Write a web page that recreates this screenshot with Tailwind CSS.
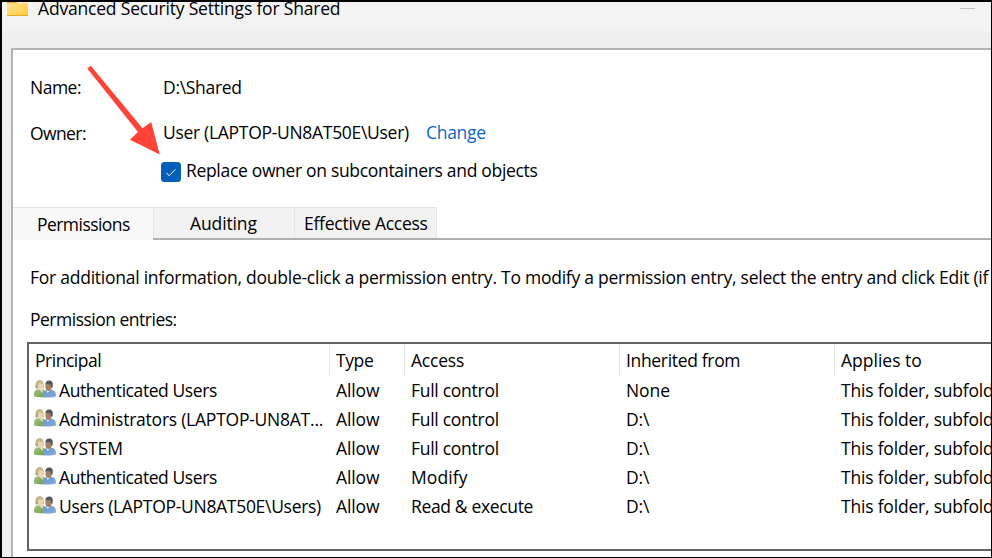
<!DOCTYPE html>
<html lang="en">
<head>
    <meta charset="UTF-8">
    <meta name="viewport" content="width=device-width, initial-scale=1.0">
    <title>Advanced Security Settings for Shared</title>
    <script src="https://cdn.jsdelivr.net/npm/@tailwindcss/browser@4"></script>
</head>
<body class="bg-black">
    <svg class="absolute h-0 w-0">
        <linearGradient id="folder-fill" x1="0" y1="0" x2="1" y2="1">
            <stop offset="0" stop-color="#ffe69a"/>
            <stop offset="1" stop-color="#ffc83d"/>
        </linearGradient>
        <linearGradient id="green-shirt" x1="0" y1="0" x2="1" y2="1">
            <stop offset="0" stop-color="#a9c585"/>
            <stop offset="1" stop-color="#6b9c50"/>
        </linearGradient>
        <linearGradient id="blue-shirt" x1="0" y1="0" x2="1" y2="1">
            <stop offset="0" stop-color="#6797cd"/>
            <stop offset="1" stop-color="#86acdc"/>
        </linearGradient>
        <symbol id="group-icon" viewBox="0 0 22 18">
            <path d="M1.500 8.500C1.300 4 1.800.3 5.500.3c3.400 0 4.300 2.500 4.200 7.700z" fill="#b3a275"/>
            <path d="M0 16.500v-2.700C0 11 1.500 9.800 3.800 9.200h4.700c2 .4 2.800 1.800 2.800 4V16.800q-5 1.200-11.300-.3z" fill="url(#green-shirt)"/>
            <path d="M4.300 8.500h4.500L8.700 13z" fill="#efe0c4"/>
            <ellipse cx="6.600" cy="5.700" rx="2.700" ry="4" fill="#ecd5b2"/>
            <path d="M2.300 6C2.500 2.500 4 .8 6.500 1c1.700.2 2.600 1.200 2.900 3.200C7.700 4 6.500 3.400 5.700 2.700 5.200 4.200 4 5.500 2.300 6z" fill="#c9ba8c"/>
            <path d="M9.300 17.400c-.2-4.200.6-6.600 3.700-7.300h5c3.200.5 4 2.500 4 6.500-3.500 1.100-9 1.200-12.700.8z" fill="url(#blue-shirt)"/>
            <path d="M12.300 9.700h4.500L13.500 13z" fill="#e9eef5"/>
            <ellipse cx="14.600" cy="6.700" rx="3.200" ry="4.200" fill="#a58164"/>
            <path d="M11.300 4.800C11.400 1.800 12.800.6 15.200.6c3 0 4.400 2 3.200 7.100l-1.500-.5-.4-2.900c-1.700.2-3.200-.1-4-.9-.2.700-.6 1.200-1.200 1.400z" fill="#55565a"/>
        </symbol>
    </svg>

    <div class="relative h-[558px] w-[992px] overflow-hidden border-t-2 border-r border-b border-l-2 border-black bg-[#efefef] font-['Open_Sans','Noto_Sans',sans-serif] text-[17.5px] leading-6 whitespace-nowrap text-black">
        <header class="flex h-[29px] items-start justify-between overflow-hidden bg-[#f3f3f3]">
            <div class="flex">
                <svg class="ml-[5px] h-[14px] w-[21px]" viewBox="0 0 21 14">
                    <path d="M0 0h9l2 1h10v12.500H0z" fill="url(#folder-fill)"/>
                    <path d="M0 0h9l1.500 1.200H0z" fill="#f0b429"/>
                    <path d="M0 13h21v1H0z" fill="#eba922"/>
                </svg>
                <h1 class="-mt-[6px] ml-[10px] tracking-[-0.19px]">Advanced Security Settings for Shared</h1>
            </div>
            <div class="mt-[6px] mr-4 h-px w-[15px] bg-[#c3c3c3]"></div>
        </header>

        <main class="mt-[17px] ml-[9px] h-[509px] overflow-hidden border-t-2 border-l-2 border-[#b3b3b3] bg-white">
            <div class="grid grid-cols-[133px_1fr] pt-[25px] pl-[17px]">
                <span class="tracking-[-0.5px]">Name:</span>
                <span class="tracking-[-0.3px]">D:\Shared</span>
                <span class="mt-[22px] tracking-[-0.6px]">Owner:</span>
                <div class="mt-[21px] flex">
                    <span class="w-[263px] tracking-[-0.3px]">User (LAPTOP-UN8AT50E\User)</span>
                    <a class="tracking-[-0.3px] text-[#0f66c4]">Change</a>
                </div>
            </div>
            <label class="mt-[13px] ml-[148px] flex">
                <svg class="mt-1 mr-[5px] h-5 w-5" viewBox="0 0 20 20">
                    <rect width="20" height="20" rx="3.500" fill="#005fb8"/>
                    <path d="M5.200 10.800l3 2.900 6.300-6.400" fill="none" stroke="#fff" stroke-width="1"/>
                </svg>
                <span class="tracking-[-0.32px]">Replace owner on subcontainers and objects</span>
            </label>

            <nav class="mt-[25px] flex h-[33px] items-stretch">
                <div class="w-[140px] border-t border-[#e5e5e5] bg-[#f9f9f9] pt-1 pl-6 tracking-[-0.55px]">Permissions</div>
                <div class="flex flex-1 border-b-2 border-[#b0b0b0]">
                    <div class="w-[141px] border-t border-l border-[#e5e5e5] bg-[#f2f2f2] pt-[3px] pl-9 tracking-[-0.12px]">Auditing</div>
                    <div class="w-[143px] border-x border-t border-[#e5e5e5] bg-[#f2f2f2] pt-[3px] pl-[9px] tracking-[-0.26px]">Effective Access</div>
                </div>
            </nav>

            <p class="mt-[25px] ml-[17px] tracking-[-0.25px]">For additional information, double-click a permission entry. To modify a permission entry, select the entry and click Edit (if</p>
            <p class="mt-[18px] ml-[17px] tracking-[-0.5px]">Permission entries:</p>

            <section class="mt-[11px] ml-[14px] h-[209px] overflow-hidden border-y-2 border-l-2 border-[#646464]">
                <div class="grid h-[31px] grid-cols-[301px_75px_215px_215px_157px]">
                    <div class="border-r border-[#e5e5e5] pt-1 pl-[6px] tracking-[-0.47px]">Principal</div>
                    <div class="border-r border-[#e5e5e5] pt-1 pl-[6px] tracking-[-0.4px]">Type</div>
                    <div class="border-r border-[#e5e5e5] pt-1 pl-[6px] tracking-[-0.2px]">Access</div>
                    <div class="border-r border-[#e5e5e5] pt-1 pl-[6px] tracking-[-0.33px]">Inherited from</div>
                    <div class="pt-1 pl-[6px]">Applies to</div>
                </div>
                <div id="entries"></div>
            </section>
        </main>

        <!-- pointer to the replace owner checkbox -->
        <svg class="absolute top-[58px] left-[78px]" width="90" height="100" viewBox="80 60 90 100">
            <path d="M87.300 68.500L90.800 65.700L142.500 128.300L151.200 122L159.700 154.500L130 139.700L138 132z" fill="#fe4338"/>
        </svg>
    </div>

    <script>
        const entries = [
            { principal: 'Authenticated Users', track: 'tracking-[-0.42px]', access: 'Full control', accessTrack: 'tracking-[-0.28px]', from: 'None' },
            { principal: 'Administrators (LAPTOP-UN8AT...', track: 'tracking-[-0.24px]', access: 'Full control', accessTrack: 'tracking-[-0.28px]', from: 'D:\\' },
            { principal: 'SYSTEM', track: 'tracking-[0px]', access: 'Full control', accessTrack: 'tracking-[-0.28px]', from: 'D:\\' },
            { principal: 'Authenticated Users', track: 'tracking-[-0.42px]', access: 'Modify', accessTrack: 'tracking-[0.1px]', from: 'D:\\' },
            { principal: 'Users (LAPTOP-UN8AT50E\\Users)', track: 'tracking-[-0.3px]', access: 'Read & execute', accessTrack: 'tracking-[-0.35px]', from: 'D:\\' }
        ];

        document.getElementById('entries').innerHTML = entries.map(entry => `
            <div class="grid h-[29px] grid-cols-[301px_75px_215px_215px_157px] items-center">
                <div class="flex pl-[5px]">
                    <svg class="mt-[2px] mr-[3px] h-[18px] w-[22px]"><use href="#group-icon"/></svg>
                    <span class="${entry.track}">${entry.principal}</span>
                </div>
                <span class="pl-[6px] tracking-[-0.1px]">Allow</span>
                <span class="pl-[6px] ${entry.accessTrack}">${entry.access.replace('&', '&amp;')}</span>
                <span class="pl-[6px] tracking-[-0.1px]">${entry.from}</span>
                <span class="pl-[6px] tracking-[-0.2px]">This folder, subfolders and files</span>
            </div>
        `).join('');
    </script>
</body>
</html>
